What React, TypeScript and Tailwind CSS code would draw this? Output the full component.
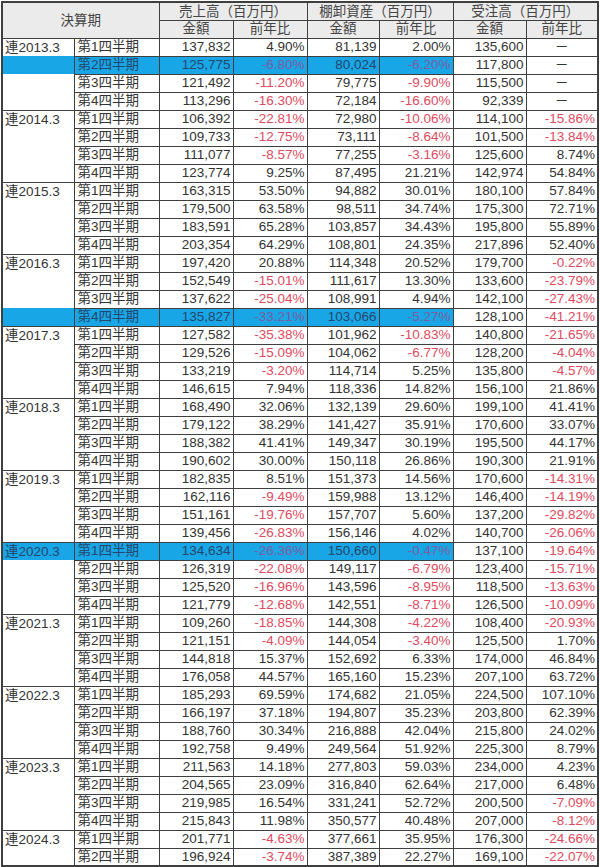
import React from "react"

type Row = [string, string, string, string, string, string]

const years: { label: string; rows: Row[]; hl?: number }[] = [
  {
    label: "連2013.3",
    hl: 1,
    rows: [
      ["137,832", "4.90%", "81,139", "2.00%", "135,600", "－"],
      ["125,775", "-6.80%", "80,024", "-6.20%", "117,800", "－"],
      ["121,492", "-11.20%", "79,775", "-9.90%", "115,500", "－"],
      ["113,296", "-16.30%", "72,184", "-16.60%", "92,339", "－"],
    ],
  },
  {
    label: "連2014.3",
    rows: [
      ["106,392", "-22.81%", "72,980", "-10.06%", "114,100", "-15.86%"],
      ["109,733", "-12.75%", "73,111", "-8.64%", "101,500", "-13.84%"],
      ["111,077", "-8.57%", "77,255", "-3.16%", "125,600", "8.74%"],
      ["123,774", "9.25%", "87,495", "21.21%", "142,974", "54.84%"],
    ],
  },
  {
    label: "連2015.3",
    rows: [
      ["163,315", "53.50%", "94,882", "30.01%", "180,100", "57.84%"],
      ["179,500", "63.58%", "98,511", "34.74%", "175,300", "72.71%"],
      ["183,591", "65.28%", "103,857", "34.43%", "195,800", "55.89%"],
      ["203,354", "64.29%", "108,801", "24.35%", "217,896", "52.40%"],
    ],
  },
  {
    label: "連2016.3",
    hl: 3,
    rows: [
      ["197,420", "20.88%", "114,348", "20.52%", "179,700", "-0.22%"],
      ["152,549", "-15.01%", "111,617", "13.30%", "133,600", "-23.79%"],
      ["137,622", "-25.04%", "108,991", "4.94%", "142,100", "-27.43%"],
      ["135,827", "-33.21%", "103,066", "-5.27%", "128,100", "-41.21%"],
    ],
  },
  {
    label: "連2017.3",
    rows: [
      ["127,582", "-35.38%", "101,962", "-10.83%", "140,800", "-21.65%"],
      ["129,526", "-15.09%", "104,062", "-6.77%", "128,200", "-4.04%"],
      ["133,219", "-3.20%", "114,714", "5.25%", "135,800", "-4.57%"],
      ["146,615", "7.94%", "118,336", "14.82%", "156,100", "21.86%"],
    ],
  },
  {
    label: "連2018.3",
    rows: [
      ["168,490", "32.06%", "132,139", "29.60%", "199,100", "41.41%"],
      ["179,122", "38.29%", "141,427", "35.91%", "170,600", "33.07%"],
      ["188,382", "41.41%", "149,347", "30.19%", "195,500", "44.17%"],
      ["190,602", "30.00%", "150,118", "26.86%", "190,300", "21.91%"],
    ],
  },
  {
    label: "連2019.3",
    rows: [
      ["182,835", "8.51%", "151,373", "14.56%", "170,600", "-14.31%"],
      ["162,116", "-9.49%", "159,988", "13.12%", "146,400", "-14.19%"],
      ["151,161", "-19.76%", "157,707", "5.60%", "137,200", "-29.82%"],
      ["139,456", "-26.83%", "156,146", "4.02%", "140,700", "-26.06%"],
    ],
  },
  {
    label: "連2020.3",
    hl: 0,
    rows: [
      ["134,634", "-26.36%", "150,660", "-0.47%", "137,100", "-19.64%"],
      ["126,319", "-22.08%", "149,117", "-6.79%", "123,400", "-15.71%"],
      ["125,520", "-16.96%", "143,596", "-8.95%", "118,500", "-13.63%"],
      ["121,779", "-12.68%", "142,551", "-8.71%", "126,500", "-10.09%"],
    ],
  },
  {
    label: "連2021.3",
    rows: [
      ["109,260", "-18.85%", "144,308", "-4.22%", "108,400", "-20.93%"],
      ["121,151", "-4.09%", "144,054", "-3.40%", "125,500", "1.70%"],
      ["144,818", "15.37%", "152,692", "6.33%", "174,000", "46.84%"],
      ["176,058", "44.57%", "165,160", "15.23%", "207,100", "63.72%"],
    ],
  },
  {
    label: "連2022.3",
    rows: [
      ["185,293", "69.59%", "174,682", "21.05%", "224,500", "107.10%"],
      ["166,197", "37.18%", "194,807", "35.23%", "203,800", "62.39%"],
      ["188,760", "30.34%", "216,888", "42.04%", "215,800", "24.02%"],
      ["192,758", "9.49%", "249,564", "51.92%", "225,300", "8.79%"],
    ],
  },
  {
    label: "連2023.3",
    rows: [
      ["211,563", "14.18%", "277,803", "59.03%", "234,000", "4.23%"],
      ["204,565", "23.09%", "316,840", "62.64%", "217,000", "6.48%"],
      ["219,985", "16.54%", "331,241", "52.72%", "200,500", "-7.09%"],
      ["215,843", "11.98%", "350,577", "40.48%", "207,000", "-8.12%"],
    ],
  },
  {
    label: "連2024.3",
    rows: [
      ["201,771", "-4.63%", "377,661", "35.95%", "176,300", "-24.66%"],
      ["196,924", "-3.74%", "387,389", "22.27%", "169,100", "-22.07%"],
    ],
  },
]

const quarters = ["第1四半期", "第2四半期", "第3四半期", "第4四半期"]

const bd = "border border-[#3f3f3f]"
const hlBg = "bg-[#19a6e6]"

function ValueCell({ value, ratio, hl }: { value: string; ratio: boolean; hl: boolean }) {
  const neg = value.startsWith("-")
  let color = "text-[#333333]"
  if (ratio && neg) color = hl ? "text-[#7b5d9e]" : "text-[#e04a5e]"
  else if (hl) color = "text-[#24466c]"
  const align = value === "－" ? "text-center" : "text-right pr-[2px]"
  return <td className={`${bd} ${align} ${color} ${hl ? hlBg : ""}`}>{value}</td>
}

export default function App() {
  return (
    <div className="min-h-screen bg-white pt-px pl-px">
      <table
        className="table-fixed border-collapse border-2 border-[#3f3f3f] text-[13.5px] leading-none text-[#333333]"
        style={{ width: 596, fontFamily: '"Liberation Sans", "Noto Sans CJK JP", sans-serif' }}
      >
        <colgroup>
          <col className="w-[72px]" />
          <col className="w-[85px]" />
          <col className="w-[74px]" />
          <col className="w-[74px]" />
          <col className="w-[72px]" />
          <col className="w-[74px]" />
          <col className="w-[73px]" />
          <col className="w-[72px]" />
        </colgroup>
        <thead className="bg-[#ebebeb] text-[#444444]">
          <tr className="h-[18px]">
            <th colSpan={2} rowSpan={2} className={`${bd} font-normal text-center`}>決算期</th>
            <th colSpan={2} className={`${bd} font-normal text-center`}>売上高（百万円）</th>
            <th colSpan={2} className={`${bd} font-normal text-center`}>棚卸資産（百万円）</th>
            <th colSpan={2} className={`${bd} font-normal text-center`}>受注高（百万円）</th>
          </tr>
          <tr className="h-[18px]">
            <th className={`${bd} font-normal`}>金額</th>
            <th className={`${bd} font-normal`}>前年比</th>
            <th className={`${bd} font-normal`}>金額</th>
            <th className={`${bd} font-normal`}>前年比</th>
            <th className={`${bd} font-normal`}>金額</th>
            <th className={`${bd} font-normal`}>前年比</th>
          </tr>
        </thead>
        <tbody>
          {years.map((y) =>
            y.rows.map((r, i) => {
              const hl = y.hl === i
              const last = i === y.rows.length - 1
              return (
                <tr key={y.label + i} className="h-[18px]">
                  <td
                    className={`border-x border-[#3f3f3f] pl-[2px] text-left ${i === 0 ? "border-t" : ""} ${last ? "border-b" : ""} ${hl ? `${hlBg} text-[#24466c]` : ""}`}
                  >
                    {i === 0 ? y.label : ""}
                  </td>
                  <td className={`${bd} pl-[3px] text-left ${hl ? `${hlBg} text-[#24466c]` : ""}`}>{quarters[i]}</td>
                  {r.map((v, j) => (
                    <ValueCell key={j} value={v} ratio={j % 2 === 1} hl={hl && j < 4} />
                  ))}
                </tr>
              )
            })
          )}
        </tbody>
      </table>
    </div>
  )
}
